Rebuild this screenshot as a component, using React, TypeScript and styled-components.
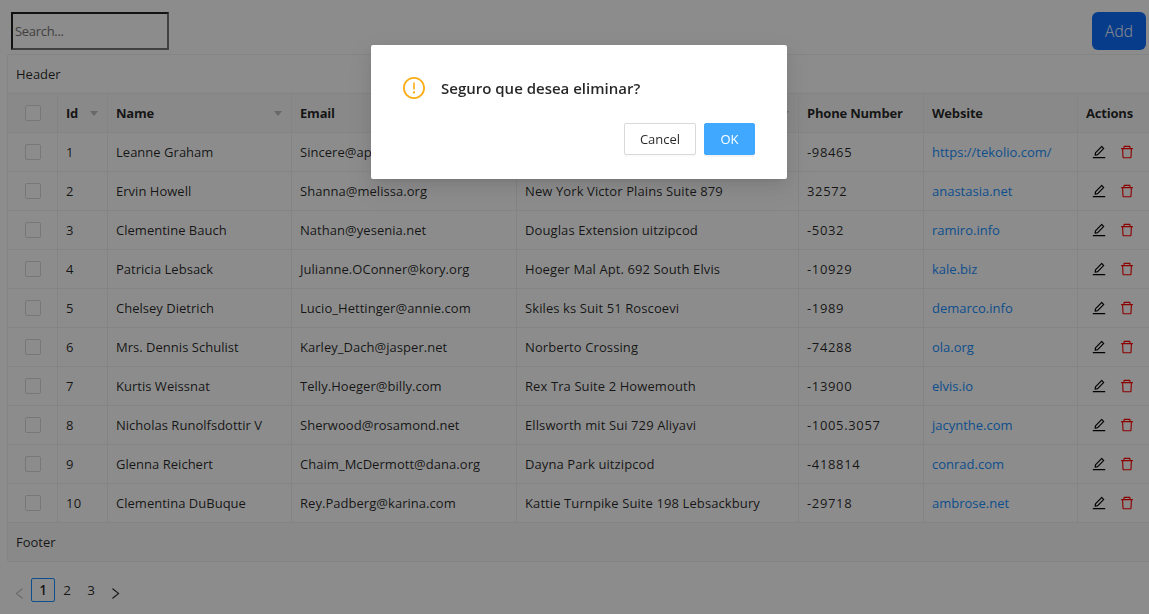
import React from "react";
import styled, { createGlobalStyle } from "styled-components";
import { AiOutlineEdit, AiOutlineDelete, AiOutlineExclamationCircle, AiOutlineLeft, AiOutlineRight } from "react-icons/ai";

const GlobalStyle = createGlobalStyle`
  * { box-sizing: border-box; }
  html, body { margin: 0; height: 100%; overflow: hidden; background: #fff; }
  body {
    font-family: "Open Sans", "Noto Sans", sans-serif;
    font-size: 13px;
    line-height: 22px;
    color: rgba(0, 0, 0, 0.85);
  }
`;

const Page = styled.div`
  height: 614px;
  overflow: hidden;
`;

const Toolbar = styled.div`
  display: flex;
  justify-content: space-between;
  padding: 12px 3px 4px 11px;
`;

const SearchInput = styled.input`
  width: 158px;
  height: 38px;
  padding: 1px 2px;
  border: 2px solid;
  border-color: #212121 #767676 #767676 #212121;
  border-radius: 0;
  background: #fff;
  font: inherit;
  letter-spacing: -0.3px;
  outline: none;
  &::placeholder { color: #757575; opacity: 1; }
`;

const AddButton = styled.button`
  width: 54px;
  height: 38px;
  padding: 0;
  border: 0;
  border-radius: 6px;
  background: #0d6efd;
  color: #fff;
  font: 300 15.5px/24px "Open Sans", sans-serif;
`;

const TableFrame = styled.div`
  margin-left: 7px;
  border-left: 1px solid #f0f0f0;
  border-top: 1px solid #f0f0f0;
  border-radius: 2px 0 0 2px;
  overflow: hidden;
`;

const Bar = styled.div<{ $shaded?: boolean }>`
  height: 39px;
  padding: 8px;
  border-bottom: 1px solid #f0f0f0;
  background: ${(p) => (p.$shaded ? "#fafafa" : "#fff")};
`;

const Table = styled.table`
  width: 1150px;
  table-layout: fixed;
  border-collapse: separate;
  border-spacing: 0;
`;

const Cell = styled.td<{ $spacing?: number }>`
  height: 39px;
  padding: 0 8px;
  border-right: 1px solid #f0f0f0;
  border-bottom: 1px solid #f0f0f0;
  white-space: nowrap;
  letter-spacing: ${(p) => p.$spacing ?? 0}px;
`;

const HeadCell = styled(Cell)`
  background: #fafafa;
  font-weight: 700;
  letter-spacing: -0.2px;
  text-align: left;
`;

const HeadContent = styled.div`
  display: flex;
  align-items: center;
  justify-content: space-between;
`;

const Caret = styled.span`
  margin-right: 1px;
  border: 4.5px solid transparent;
  border-top: 5px solid #bfbfbf;
  border-bottom: 0;
`;

const Checkbox = styled.span`
  display: block;
  width: 16px;
  height: 16px;
  margin: 0 auto;
  border: 1px solid #d9d9d9;
  border-radius: 2px;
  background: #fff;
`;

const Link = styled.a`
  color: #1890ff;
  text-decoration: none;
`;

const Actions = styled.div`
  display: flex;
  gap: 14px;
  padding-left: 6px;
  svg { display: block; width: 14px; height: 14px; }
  svg + svg { color: red; }
`;

const Pagination = styled.div`
  display: flex;
  align-items: center;
  height: 24px;
  margin: 16px 0 0 7px;
  font-size: 13.5px;
`;

const PageItem = styled.span<{ $active?: boolean }>`
  width: 24px;
  height: 24px;
  text-align: center;
  line-height: 22px;
  border: 1px solid ${(p) => (p.$active ? "#1890ff" : "transparent")};
  border-radius: 2px;
  font-weight: ${(p) => (p.$active ? 600 : 400)};
`;

const PageArrow = styled.span<{ $disabled?: boolean }>`
  width: 24px;
  height: 24px;
  padding-top: 9px;
  color: ${(p) => (p.$disabled ? "rgba(0,0,0,.25)" : "rgba(0,0,0,.85)")};
  svg { display: block; width: 13px; height: 13px; margin: 0 auto; }
`;

const Mask = styled.div`
  position: fixed;
  inset: 0;
  display: flex;
  justify-content: center;
  align-items: flex-start;
  padding: 45px 0 0 9px;
  background: rgba(0, 0, 0, 0.45);
`;

const Dialog = styled.div`
  width: 416px;
  height: 134px;
  padding: 32px 32px 24px;
  border-radius: 2px;
  background: #fff;
  box-shadow: 0 3px 6px -4px rgba(0, 0, 0, 0.12), 0 6px 16px rgba(0, 0, 0, 0.08),
    0 9px 28px 8px rgba(0, 0, 0, 0.05);
`;

const DialogTitle = styled.div`
  display: flex;
  align-items: center;
  gap: 16px;
  height: 22px;
  font-size: 15px;
  font-weight: 600;
  color: rgba(0, 0, 0, 0.85);
  svg { width: 22px; height: 22px; color: #faad14; }
`;

const DialogButtons = styled.div`
  display: flex;
  justify-content: flex-end;
  gap: 8px;
  margin-top: 24px;
`;

const DialogButton = styled.button<{ $primary?: boolean }>`
  width: ${(p) => (p.$primary ? 51 : 72)}px;
  height: 32px;
  padding: 0;
  border: 1px solid ${(p) => (p.$primary ? "#40a9ff" : "#d9d9d9")};
  border-radius: 2px;
  background: ${(p) => (p.$primary ? "#40a9ff" : "#fff")};
  color: ${(p) => (p.$primary ? "#fff" : "rgba(0,0,0,.85)")};
  box-shadow: 0 2px 0 rgba(0, 0, 0, ${(p) => (p.$primary ? 0.045 : 0.016)});
  font: inherit;
`;

const crop = "64 64 896 896";

const columns: { title: string; width: number; filter?: boolean; spacing?: number }[] = [
  { title: "Id", width: 50, filter: true, spacing: 0.4 },
  { title: "Name", width: 184, filter: true, spacing: 0.02 },
  { title: "Email", width: 225, spacing: 0.04 },
  { title: "Address", width: 282, filter: true, spacing: 0.1 },
  { title: "Phone Number", width: 125, spacing: 0.65 },
  { title: "Website", width: 154 },
  { title: "Actions", width: 80 },
];

const rows = [
  ["1", "Leanne Graham", "Sincere@april.biz", "Kulas Light Apt. 556", "-98465", "https://tekolio.com/"],
  ["2", "Ervin Howell", "Shanna@melissa.org", "New York Victor Plains Suite 879", "32572", "anastasia.net"],
  ["3", "Clementine Bauch", "Nathan@yesenia.net", "Douglas Extension uitzipcod", "-5032", "ramiro.info"],
  ["4", "Patricia Lebsack", "Julianne.OConner@kory.org", "Hoeger Mal Apt. 692 South Elvis", "-10929", "kale.biz"],
  ["5", "Chelsey Dietrich", "Lucio_Hettinger@annie.com", "Skiles ks Suit 51 Roscoevi", "-1989", "demarco.info"],
  ["6", "Mrs. Dennis Schulist", "Karley_Dach@jasper.net", "Norberto Crossing", "-74288", "ola.org"],
  ["7", "Kurtis Weissnat", "Telly.Hoeger@billy.com", "Rex Tra Suite 2 Howemouth", "-13900", "elvis.io"],
  ["8", "Nicholas Runolfsdottir V", "Sherwood@rosamond.net", "Ellsworth mit Sui 729 Aliyavi", "-1005.3057", "jacynthe.com"],
  ["9", "Glenna Reichert", "Chaim_McDermott@dana.org", "Dayna Park uitzipcod", "-418814", "conrad.com"],
  ["10", "Clementina DuBuque", "Rey.Padberg@karina.com", "Kattie Turnpike Suite 198 Lebsackbury", "-29718", "ambrose.net"],
];

export default function App() {
  return (
    <>
      <GlobalStyle />
      <Page>
        <Toolbar>
          <SearchInput placeholder="Search..." />
          <AddButton>Add</AddButton>
        </Toolbar>
        <TableFrame>
          <Bar>Header</Bar>
          <Table>
            <colgroup>
              <col style={{ width: 50 }} />
              {columns.map((c) => (
                <col key={c.title} style={{ width: c.width }} />
              ))}
            </colgroup>
            <thead>
              <tr>
                <HeadCell as="th"><Checkbox /></HeadCell>
                {columns.map((c) => (
                  <HeadCell as="th" key={c.title}>
                    <HeadContent>
                      {c.title}
                      {c.filter && <Caret />}
                    </HeadContent>
                  </HeadCell>
                ))}
              </tr>
            </thead>
            <tbody>
              {rows.map((row) => (
                <tr key={row[0]}>
                  <Cell><Checkbox /></Cell>
                  {row.map((value, i) => (
                    <Cell key={i} $spacing={columns[i].spacing}>
                      {i === 5 ? <Link>{value}</Link> : value}
                    </Cell>
                  ))}
                  <Cell>
                    <Actions>
                      <AiOutlineEdit viewBox={crop} color="#000" />
                      <AiOutlineDelete viewBox={crop} />
                    </Actions>
                  </Cell>
                </tr>
              ))}
            </tbody>
          </Table>
          <Bar $shaded>Footer</Bar>
        </TableFrame>
        <Pagination>
          <PageArrow $disabled><AiOutlineLeft viewBox={crop} /></PageArrow>
          <PageItem $active>1</PageItem>
          <PageItem>2</PageItem>
          <PageItem>3</PageItem>
          <PageArrow><AiOutlineRight viewBox={crop} /></PageArrow>
        </Pagination>
      </Page>
      <Mask>
        <Dialog role="dialog">
          <DialogTitle>
            <AiOutlineExclamationCircle viewBox={crop} />
            Seguro que desea eliminar?
          </DialogTitle>
          <DialogButtons>
            <DialogButton>Cancel</DialogButton>
            <DialogButton $primary>OK</DialogButton>
          </DialogButtons>
        </Dialog>
      </Mask>
    </>
  );
}
